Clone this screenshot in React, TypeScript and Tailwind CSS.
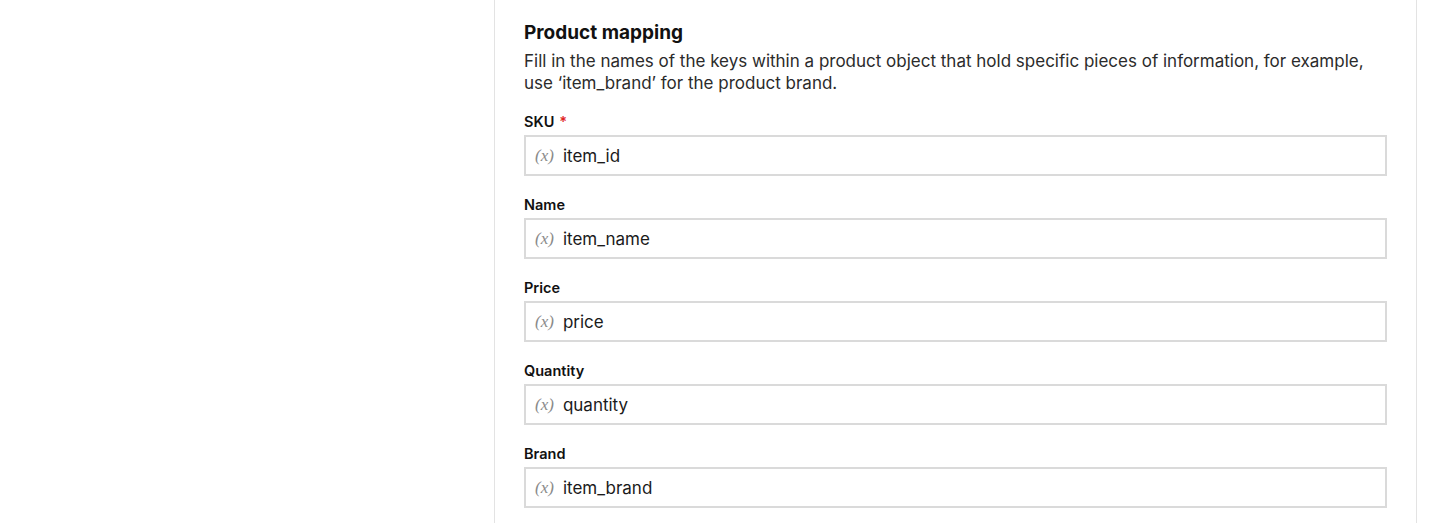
import React from "react";

const fields = [
  { label: "SKU", value: "item_id", required: true },
  { label: "Name", value: "item_name" },
  { label: "Price", value: "price" },
  { label: "Quantity", value: "quantity" },
  { label: "Brand", value: "item_brand" },
];

export default function App() {
  return (
    <div
      className="w-[1440px] h-[523px] bg-white overflow-hidden flex text-[#1a1a1a]"
      style={{ fontFamily: "Inter, 'Noto Sans', sans-serif" }}
    >
      <div className="w-[494px] shrink-0" />
      <div className="w-[923px] shrink-0 border-l border-r border-[#e3e3e3] px-[29px] pt-[20px]">
        <h2 className="text-[19px] leading-[26px] font-bold text-[#111]">Product mapping</h2>
        <p className="text-[17px] leading-[22px] text-[#2b2b2b] mt-[4px]">
          Fill in the names of the keys within a product object that hold specific pieces of information, for example,
          use ‘item_brand’ for the product brand.
        </p>
        <div className="mt-[18px] flex flex-col gap-[19px]">
          {fields.map((f) => (
            <div key={f.label} className="flex flex-col">
              <label className="text-[14.5px] leading-[20px] font-semibold text-[#111] mb-[3px]">
                {f.label}
                {f.required && <span className="text-[#e0241f] ml-[5px]">*</span>}
              </label>
              <div className="w-[863px] h-[41px] border-2 border-[#dadada] flex items-center px-[9px]">
                <span
                  className="italic text-[17px] text-[#8a8a8a] mr-[9px]"
                  style={{ fontFamily: "'Liberation Serif', 'DejaVu Serif', serif" }}
                >
                  (x)
                </span>
                <span className="text-[17px] text-[#1a1a1a] relative top-[1px]">{f.value}</span>
              </div>
            </div>
          ))}
        </div>
      </div>
    </div>
  );
}
